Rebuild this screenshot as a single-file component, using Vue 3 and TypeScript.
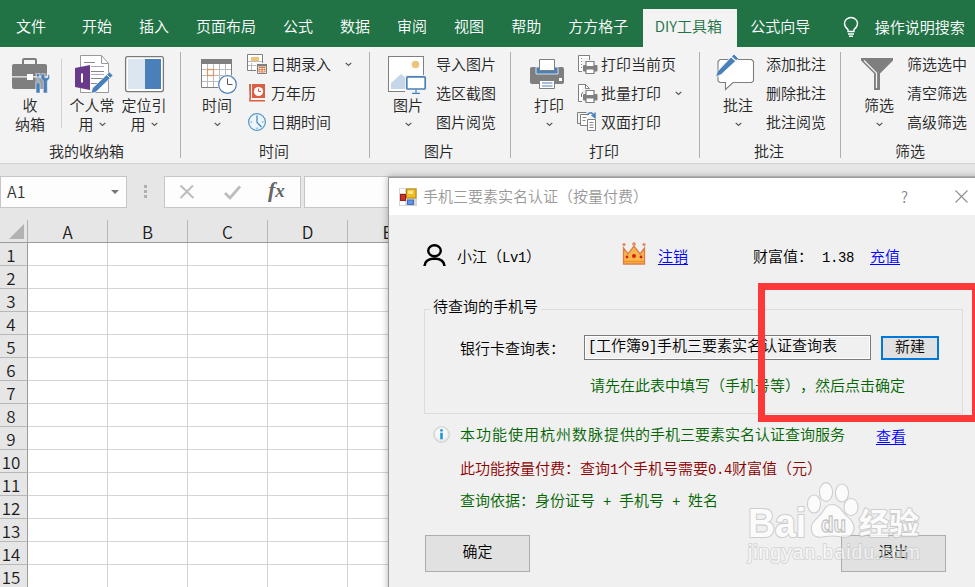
<script setup lang="ts">
interface BigButton {
  icon: string
  cx: number
  lines: string[]
  inlineArrow?: boolean
  ownArrow?: boolean
  divider?: boolean
}
interface SmallButton {
  text: string
  icon?: string
  box?: string
  arrow?: boolean
}
interface Group {
  name: string
  kind: string
  big: BigButton[]
  small: SmallButton[]
}

const tabs: string[] = ['文件', '开始', '插入', '页面布局', '公式', '数据', '审阅', '视图', '帮助', '方方格子', 'DIY工具箱', '公式向导']
const activeTab = 'DIY工具箱'

const printer = (y: number) => `
  <path d="M582 ${y + 4}h16v16h-16z" fill="#f3f3f3"/>
  <rect x="583" y="${y + 11}" width="14.500" height="6.500" rx="1" fill="#7f7f7f"/>
  <path d="M586 ${y + 7.500}h8v5h-8z" fill="#fff" stroke="#7f7f7f" stroke-width="1.200"/>
  <path d="M586 ${y + 15}h8v4.500h-8z" fill="#fff" stroke="#7f7f7f" stroke-width="1.200"/>`

const art: Record<string, string> = {
  briefcase: `
    <path d="M23 64v-4q0-1 1-1h11q1 0 1 1v4" fill="none" stroke="#7f7f7f" stroke-width="2"/>
    <rect x="12" y="64" width="35" height="25" rx="2" fill="#7f7f7f"/>
    <path d="M12 76.800h35" stroke="#f3f3f3" stroke-width="1.200"/>
    <rect x="27" y="74" width="6" height="6" fill="#fff"/>
    <path d="M35 73h14v20H35z" fill="#f3f3f3" opacity=".25"/>
    <path d="M36.500 73.500h3v2l-.8 1v6.500h1.300v10h-4v-10h1.300v-6.500l-.8-1z" fill="#4a80b9" stroke="#f3f3f3" stroke-width=".5"/>
    <path d="M42.500 73.700q-2 1.500-1.500 4.300.7 2 2.300 2.800v12.200h4V80.800q2-1 2.400-3 .3-2.700-1.800-4.100v4h-3.200v-3.500z" fill="#4a80b9" stroke="#f3f3f3" stroke-width=".5"/>`,
  note: `
    <path d="M80.500 55.500h21l7 8v29h-28z" fill="#fff" stroke="#9a9a9a"/>
    <path d="M101.500 55.500v8h7" fill="none" stroke="#9a9a9a"/>
    <path d="M84 62.500h11M91 71.500h13M91 78.500h13M91 83.500h12" stroke="#888"/>
    <path d="M91 66.500h13M91 74.500h13" stroke="#b6a3c9"/>
    <path d="M75 68l15-3v25l-15-3z" fill="#69398a"/>
    <path d="M82 73.500v9" stroke="#fff" stroke-width="2"/>
    <path d="M91 93.500l1.500-5.500L109.500 72l3.500 3.500-17 16.500z" fill="#4a80b9" stroke="#fff" stroke-width=".7"/>
    <path d="M106.500 74.500l3.700 3.700" stroke="#fff"/>`,
  panes: `
    <rect x="125.600" y="56.600" width="37.800" height="35" rx="2" fill="#fff" stroke="#7a7a7a" stroke-width="1.300"/>
    <path d="M128 59h17v30h-17z" fill="#dce6f1"/><path d="M145 59h16v30h-16z" fill="#4a80b9"/>`,
  calendar: `
    <path d="M201.500 60v27.500h30V60z" fill="#fff" stroke="#7f7f7f"/>
    <path d="M207.500 64v23M213.500 64v23M219.500 64v23M225.500 64v23M202 69.500h29M202 75.500h29M202 81.500h29" stroke="#bbb"/>
    <path d="M201 59h31v5h-31z" fill="#7f7f7f"/>
    <rect x="207.500" y="69.500" width="6" height="6" fill="#fff" stroke="#e5915a" stroke-width="1.200"/>
    <circle cx="227.500" cy="84.500" r="10" fill="#f3f3f3"/>
    <circle cx="227.500" cy="84.500" r="8.800" fill="#fff" stroke="#4a80b9" stroke-width="1.200"/>
    <path d="M227.500 78.500v6h5" fill="none" stroke="#555"/>`,
  picture: `
    <rect x="388.500" y="56.500" width="35" height="35" fill="#fff" stroke="#7f7f7f"/>
    <circle cx="415.500" cy="64.500" r="3.800" fill="#ecc57c"/>
    <path d="M391 89v-6l10-9 5 4v11z" fill="#c5d6ea"/>
    <path d="M405 75h22v20h-22z" fill="#f3f3f3"/>
    <rect x="406.800" y="76.800" width="18.400" height="12.200" rx="1" fill="#fff" stroke="#4a80b9" stroke-width="1.700"/>
    <path d="M416 90v3.500M412 93.400h8" stroke="#4a80b9" stroke-width="1.200"/>`,
  printer: `
    <rect x="530" y="67" width="34" height="17" rx="2" fill="#7f7f7f"/>
    <path d="M536 67h22v7h-22z" fill="#4a80b9" stroke="#f3f3f3" stroke-width=".8"/>
    <path d="M539.500 59.500h15v11h-15z" fill="#fff" stroke="#7f7f7f"/>
    <path d="M539.500 80.500h15v8h-15z" fill="#fff" stroke="#7f7f7f"/>
    <path d="M542 83h10.500M542 86h10.500" stroke="#4a80b9" stroke-width="1.200"/>
    <path d="M559 78h3v3h-3z" fill="#fff"/>`,
  comment: `
    <path d="M720 59.500h31.500l2 2V81l-2 1.500H733l-7.500 7v-7H720l-2-1.500V61.500z" fill="#fff" stroke="#7f7f7f" stroke-width="1.100"/>
    <path d="M715.500 77l1.800-5.500L734 54l4.500 4.500-17.300 16z" fill="#4a80b9" stroke="#f3f3f3" stroke-width=".9"/>
    <path d="M731 56.500l5 4.500" stroke="#fff" stroke-width="1.200"/>`,
  funnel: `
    <path d="M861 58h32v2.500L880 73.500V90h-6V73.500L861 60.500z" fill="#7f7f7f"/>
    <path d="M864 60.500l12.500 12.500v15" fill="none" stroke="#f3f3f3" stroke-width="1.200"/>`,
  form: `
    <path d="M247.500 54.500h15v16h-15z" fill="#fff" stroke="#7f7f7f"/>
    <path d="M248 61.500h14M248 65.500h14M251.500 63v7" stroke="#bbb"/>
    <path d="M251 57h8v4h-8z" fill="#ecc57c"/>
    <path d="M256 63h12v12h-12z" fill="#f3f3f3"/>
    <path d="M257.500 64.500h9v9h-9z" fill="#fff" stroke="#7f7f7f"/><path d="M257 64h10v2.500h-10z" fill="#7f7f7f"/>
    <path d="M259 67.500h6v4.500h-6zM262 67v5M259 69.700h6" fill="none" stroke="#d9743a"/>`,
  almanac: `
    <path d="M252 84h13v14h-13z" fill="#d95f43"/><path d="M249 84h2v14h-1.500z" fill="#d95f43"/>
    <path d="M250 98v2.800h15" fill="none" stroke="#d95f43" stroke-width="1.600"/>
    <circle cx="258.500" cy="91.500" r="4.600" fill="#fff"/><path d="M258.500 88.500v3h2.500" fill="none" stroke="#d95f43"/>`,
  clock: `
    <circle cx="257" cy="122" r="8.400" fill="#eef5fa" stroke="#5496c6" stroke-width="1.200"/>
    <path d="M257 115.500v7l4.500 4.500" fill="none" stroke="#3f85bb" stroke-width="1.200"/>
    <path d="M250.500 122h1.500M262 122h1.500M257 127.500v1.500" stroke="#5496c6"/>`,
  printPage: `
    <path d="M578.500 55.500h11v16h-11z" fill="#fff" stroke="#7f7f7f"/>
    <path d="M581 58.500h6M581 61.500h6M581 64.500h5M581 67.500h2" stroke="#888"/>${printer(54)}
    <path d="M589.500 55v5" stroke="#7f7f7f"/>`,
  printBatch: `
    <path d="M578.500 84.500h7l4 4v13h-11z" fill="#fff" stroke="#7f7f7f"/>${printer(83)}
    <path d="M585.500 88.500v-4l4 4z" fill="#fff" stroke="#7f7f7f"/>
    <path d="M581.500 97v-3l1.500-2" stroke="#777" fill="none"/>`,
  printDuplex: `
    <path d="M580 123.500h-2.500v-11h9" fill="none" stroke="#7f7f7f"/>
    <path d="M587 125.500h-6.500v-11H589" fill="#fff" stroke="#7f7f7f"/>
    <path d="M582.500 117.500h4M582.500 120.500h3" stroke="#888"/>
    <path d="M587.500 119.500h8v11h-8z" fill="#fff" stroke="#7f7f7f"/>
    <path d="M589.500 122.500h4M589.500 125h4M589.500 127.500h4" stroke="#888"/>
    <path d="M587 115q4-5 7.500 1M591.500 115l3.500 2.500v-5" fill="none" stroke="#4a80b9" stroke-width="1.500"/>`,
}

const groups: Group[] = [
  {
    name: '我的收纳箱', kind: 'box', small: [],
    big: [
      { icon: 'briefcase', cx: 30, lines: ['收', '纳箱'], divider: true },
      { icon: 'note', cx: 92, lines: ['个人常', '用'], inlineArrow: true },
      { icon: 'panes', cx: 144, lines: ['定位引', '用'], inlineArrow: true },
    ],
  },
  {
    name: '时间', kind: 'time', big: [{ icon: 'calendar', cx: 217, lines: ['时间'], ownArrow: true }],
    small: [
      { text: '日期录入', icon: 'form', box: '247 53 21 22', arrow: true },
      { text: '万年历', icon: 'almanac', box: '247 82 21 22' },
      { text: '日期时间', icon: 'clock', box: '247 111 21 22' },
    ],
  },
  {
    name: '图片', kind: 'plain', big: [{ icon: 'picture', cx: 408, lines: ['图片'], ownArrow: true }],
    small: [{ text: '导入图片' }, { text: '选区截图' }, { text: '图片阅览' }],
  },
  {
    name: '打印', kind: 'print', big: [{ icon: 'printer', cx: 549, lines: ['打印'], ownArrow: true }],
    small: [
      { text: '打印当前页', icon: 'printPage', box: '577 53 21 22' },
      { text: '批量打印', icon: 'printBatch', box: '577 82 21 22', arrow: true },
      { text: '双面打印', icon: 'printDuplex', box: '577 111 21 22' },
    ],
  },
  {
    name: '批注', kind: 'plain', big: [{ icon: 'comment', cx: 738, lines: ['批注'], ownArrow: true }],
    small: [{ text: '添加批注' }, { text: '删除批注' }, { text: '批注阅览' }],
  },
  {
    name: '筛选', kind: 'plain', big: [{ icon: 'funnel', cx: 879, lines: ['筛选'], ownArrow: true }],
    small: [{ text: '筛选选中' }, { text: '清空筛选' }, { text: '高级筛选' }],
  },
]

const columns: string[] = ['A', 'B', 'C', 'D', 'E']
const rows: number[] = Array.from({ length: 15 }, (_, i) => i + 1)

/* Splits a string into half-width and full-width runs. */
const runs = (s: string): { t: string; half: boolean }[] =>
  (s.match(/[\x20-\x7e]+|[^\x20-\x7e]+/g) ?? []).map((t) => ({ t, half: t.charCodeAt(0) < 127 }))

const userName = runs('小江（Lv1）')
const bookName = runs('[工作簿9]手机三要素实名认证查询表')
const priceNote = runs('此功能按量付费：查询1个手机号需要0.4财富值（元）')
const basisNote = runs('查询依据：身份证号 + 手机号 + 姓名')
</script>

<template>
  <div class="app">
    <nav class="tabs">
      <span v-for="t in tabs" :key="t" class="tab" :class="{ active: t === activeTab }">{{ t }}</span>
      <svg class="bulb" width="16" height="22" viewBox="0 0 16 22">
        <path d="M5 15.500v-2Q1.500 11 1.500 7.500a6.500 6 0 0 1 13 0q0 3.500-3.500 6v2zM5 18h6M6 20.300h4" fill="none" stroke="#fff" stroke-width="1.400" />
      </svg>
      <span class="tell">操作说明搜索</span>
    </nav>

    <section class="ribbon">
      <div v-for="g in groups" :key="g.name" class="group" :class="g.kind">
        <div class="group-body">
          <template v-for="b in g.big" :key="b.icon">
            <div class="big">
              <svg class="bicon" width="48" height="44" :viewBox="`${b.cx - 24} 52 48 44`" v-html="art[b.icon]"></svg>
              <span class="line">{{ b.lines[0] }}</span>
              <span class="line">
                <span v-if="b.lines[1]">{{ b.lines[1] }}</span>
                <svg v-if="b.inlineArrow || b.ownArrow" class="chev" width="7" height="5" viewBox="0 0 7 5"><path d="M.7.900l2.800 2.600L6.300.900" /></svg>
              </span>
            </div>
            <i v-if="b.divider" class="divider"></i>
          </template>
          <div v-if="g.small.length" class="smalls">
            <div v-for="s in g.small" :key="s.text" class="small">
              <svg v-if="s.icon" class="sicon" width="21" height="22" :viewBox="s.box" v-html="art[s.icon]"></svg>
              <span>{{ s.text }}</span>
              <svg v-if="s.arrow" class="chev far" width="7" height="5" viewBox="0 0 7 5"><path d="M.7.900l2.800 2.600L6.300.900" /></svg>
            </div>
          </div>
        </div>
        <div class="group-name">{{ g.name }}</div>
      </div>
    </section>

    <section class="formula">
      <div class="namebox"><span>A1</span><i class="caret"></i></div>
      <div class="dots"><i></i><i></i><i></i></div>
      <div class="fx">
        <svg width="16" height="16" viewBox="0 0 16 16"><path d="M1.500 1.500l13 12.500M14 1.500L1.500 14" stroke="#bdbdbd" stroke-width="2" fill="none" /></svg>
        <svg width="17" height="15" viewBox="0 0 17 15"><path d="M1 8l5 5L16 1.500" stroke="#bdbdbd" stroke-width="2.800" fill="none" /></svg>
        <span class="fxtext"><b>f</b>x</span>
      </div>
      <div class="entry"></div>
    </section>

    <section class="sheet">
      <div class="head">
        <div class="corner"><svg width="15" height="15" viewBox="0 0 15 15"><path d="M15 0v15H0z" fill="#b2b2b2" /></svg></div>
        <div v-for="c in columns" :key="c" class="col">{{ c }}</div>
      </div>
      <div v-for="r in rows" :key="r" class="row">
        <div class="num">{{ r }}</div>
        <div v-for="c in columns" :key="c" class="cell"></div>
      </div>
    </section>

    <section class="dialog">
      <header class="title">
        <svg width="18" height="18" viewBox="0 0 18 18">
          <rect width="18" height="18" fill="#d6d6d6" />
          <path d="M1 1h5v4H1zM1 13h5v4H1z" fill="#fff" />
          <rect x="7.500" y="1" width="9.500" height="9" fill="#f3bd22" stroke="#b88708" />
          <rect x="9" y="2.500" width="5" height="3.500" fill="#ffe38a" />
          <rect x="1.500" y="6.500" width="5" height="6" fill="#c8332b" stroke="#942019" />
          <rect x="8.500" y="12" width="6" height="4.500" fill="#5f93e6" stroke="#3f6fc4" />
        </svg>
        <span class="caption">手机三要素实名认证（按量付费）</span>
        <span class="help">?</span>
        <svg class="close" width="13" height="13" viewBox="0 0 13 13"><path d="M.5.500l12 12M12.500.500l-12 12" stroke="#8f8f8f" stroke-width="1.100" /></svg>
      </header>

      <div class="user">
        <svg width="24" height="24" viewBox="0 0 24 24">
          <ellipse cx="11.500" cy="6.800" rx="6.300" ry="5.500" fill="none" stroke="#000" stroke-width="2.400" />
          <path d="M1.500 22q.5-7 10-7.500 9.500.5 10 7.500" fill="none" stroke="#000" stroke-width="2.600" />
        </svg>
        <span><span v-for="(p, i) in userName" :key="i" :class="{ half: p.half }">{{ p.t }}</span></span>
        <svg class="crown" width="24" height="24" viewBox="0 0 24 24">
          <path d="M1.500 6L6 12l6-8 6 8 4.500-6v16h-21z" fill="#f9b64b" stroke="#dd7c4c" stroke-width="1.300" />
          <path d="M2 19.500h20" stroke="#f18c22" stroke-width="1.300" />
          <circle cx="2" cy="2.500" r="1.600" fill="#e28a57" /><circle cx="12" cy="2" r="1.800" fill="#e28a57" /><circle cx="22" cy="2.500" r="1.600" fill="#e28a57" />
          <circle cx="12" cy="14" r="2" fill="#d0201a" /><circle cx="5" cy="15" r="1.400" fill="#d0201a" /><circle cx="19" cy="15" r="1.400" fill="#d0201a" />
        </svg>
        <a>注销</a>
        <span>财富值：</span>
        <span><span class="half">1.38</span></span>
        <a>充值</a>
      </div>

      <fieldset class="box">
        <legend>待查询的手机号</legend>
        <div class="field">
          <label>银行卡查询表：</label>
          <div class="input"><span v-for="(p, i) in bookName" :key="i" :class="{ half: p.half }">{{ p.t }}</span></div>
          <button class="create">新建</button>
        </div>
        <p class="hint">请先在此表中填写（手机号等），然后点击确定</p>
      </fieldset>

      <div class="note green info">
        <svg width="17" height="17" viewBox="0 0 17 17">
          <circle cx="8.500" cy="8.500" r="7.800" fill="#e9e9e9" stroke="#cdcdcd" />
          <circle cx="8.500" cy="7.500" r="6" fill="#f7f7f7" />
          <path d="M8.500 3.200v2.300M8.500 6.800v6.500" stroke="#1c9bd3" stroke-width="2.600" />
        </svg>
        <span class="service"><span class="wide">本功能使用杭州数脉提</span>供的手机三要素实名认证查询服务</span>
        <a>查看</a>
      </div>
      <div class="note red"><span><span v-for="(p, i) in priceNote" :key="i" :class="{ half: p.half }">{{ p.t }}</span></span></div>
      <div class="note basis green"><span><span v-for="(p, i) in basisNote" :key="i" :class="{ half: p.half }">{{ p.t }}</span></span></div>

      <footer class="actions">
        <button>确定</button>
        <button>退出</button>
      </footer>
    </section>

    <svg class="watermark" width="180" height="90" viewBox="745 480 180 90">
      <g fill="#fff" stroke="#c4c4c4" stroke-width="2.200" stroke-linejoin="round" paint-order="stroke">
        <g opacity=".9">
          <text x="748" y="537" font-size="41" font-weight="700" textLength="58" lengthAdjust="spacingAndGlyphs">Bai</text>
          <ellipse cx="814" cy="504" rx="6" ry="8.500" />
          <ellipse cx="826" cy="492" rx="6" ry="8.800" />
          <ellipse cx="842" cy="493" rx="6" ry="8.500" />
          <ellipse cx="851" cy="507" rx="6.500" ry="8" />
          <path d="M832 505c7 0 9 6 14 11 5 4 9 9 7 15-2 7-9 6-14 5-5-.7-9-.7-14 0-6 1.500-12 1-13-6-1-6 3-9 7-13 5-4 6-12 13-12z" />
          <text x="859" y="534" font-size="30" font-weight="700" class="cjk">经验</text>
        </g>
        <text x="748" y="558.500" font-size="19.500" textLength="172" lengthAdjust="spacing" opacity=".65" stroke-width="2">jingyan.baidu.com</text>
      </g>
      <text x="821" y="532" font-size="22" font-weight="700" fill="#fff" stroke="#bdbdbd" stroke-width="1.300" textLength="25" lengthAdjust="spacingAndGlyphs">du</text>
    </svg>
    <div class="marker"></div>
  </div>
</template>

<style>
body {
  overflow: hidden;
}
</style>

<style scoped>
.app {
  position: relative;
  width: 975px;
  height: 587px;
  overflow: hidden;
  background: #e6e6e6;
  color: #262626;
  font: 350 15px/19px "Noto Sans CJK SC", sans-serif;
  white-space: nowrap;
  text-spacing-trim: space-all;
}
.app svg {
  display: block;
  flex: none;
}
.tabs {
  display: flex;
  align-items: flex-end;
  height: 47px;
  padding-left: 3px;
  background: #217346;
  color: #fff;
}
.tab {
  height: 38px;
  padding: 0 13.5px;
  line-height: 33px;
}
.tab:first-child {
  padding-left: 13px;
  margin-right: 9px;
}
.tab.active {
  background: #f3f3f3;
  color: #217346;
  width: 70px;
  padding: 0 12px;
  margin: 0 0 0 1px;
}
.bulb {
  margin: 0 16px 9px 19px;
}
.tell {
  height: 38px;
  line-height: 35px;
}
.ribbon {
  display: flex;
  height: 116px;
  background: #f3f3f3;
  border-bottom: 1px solid #d2d2d2;
}
.group {
  flex: none;
  width: 141px;
  display: flex;
  flex-direction: column;
  background: linear-gradient(#b0b0b0, #b0b0b0) no-repeat right 5px / 1px 106px;
}
.group.box {
  width: 181px;
}
.group.time,
.group.print {
  width: 189px;
}
.group-body {
  display: flex;
  height: 90px;
  box-sizing: border-box;
  padding: 3px 0 0 12px;
}
.box .group-body {
  padding-left: 4px;
}
.time .group-body {
  padding-left: 10px;
}
.big {
  width: 52px;
  padding-top: 2px;
  display: flex;
  flex-direction: column;
  align-items: center;
}
.bicon {
  margin-bottom: -1px;
}
.line {
  height: 19px;
  display: flex;
  align-items: center;
  gap: 5px;
}
.line .chev {
  margin-top: 2px;
}
.chev {
  fill: none;
  stroke: #555;
  stroke-width: 1.2;
}
.chev.far {
  margin: 2px 0 0 10px;
}
.divider {
  width: 1px;
  height: 69px;
  margin: 9px 4px 0 5px;
  background: #d2d2d2;
}
.smalls {
  margin: -1px 0 0 2px;
}
.time .smalls {
  margin-left: 4px;
}
.small {
  height: 29px;
  display: flex;
  align-items: center;
  gap: 4px;
}
.sicon {
  margin-right: -1px;
}
.group-name {
  height: 22px;
  line-height: 28px;
  text-align: center;
  padding-right: 3px;
}
.box .group-name {
  padding-right: 8px;
}
.formula {
  display: flex;
  align-items: flex-start;
  height: 44px;
  box-sizing: border-box;
  padding-top: 12px;
}
.formula > div {
  flex: none;
  height: 32px;
  box-sizing: border-box;
}
.namebox,
.fx,
.entry {
  background: #fdfdfd;
  border: 1px solid #c6c6c6;
}
.namebox {
  width: 127px;
  display: flex;
  align-items: center;
  justify-content: space-between;
  padding: 0 7px 1px 6px;
  font-size: 16px;
  color: #333;
}
.caret {
  border: 4px solid transparent;
  border-top-color: #777;
  border-bottom: 0;
}
.dots {
  width: 37px;
  padding: 9px 0 0 17px;
  display: flex;
  flex-direction: column;
  gap: 2px;
}
.dots i {
  width: 3px;
  height: 3px;
  background: #b0b0b0;
}
.fx {
  width: 137px;
  display: flex;
  align-items: center;
  padding-left: 14px;
  gap: 29px;
}
.fxtext {
  font: italic 19px/28px "Liberation Serif", serif;
  color: #666;
  font-weight: 700;
  margin: -3px 0 0 -2px;
}
.fxtext b {
  font-size: 22px;
}
.entry {
  width: 671px;
  margin-left: 3px;
}
.sheet {
  width: 428px;
  background: #fff;
}
.head,
.row {
  display: flex;
}
.head {
  height: 35px;
  box-sizing: border-box;
  background: #e6e6e6;
  padding-top: 12px;
  border-bottom: 1px solid #9b9b9b;
}
.corner {
  width: 28px;
  box-sizing: border-box;
  padding: 4px 0 0 9px;
  border-right: 1px solid #b0b0b0;
}
.col,
.cell {
  flex: none;
  width: 80px;
  box-sizing: border-box;
  border-right: 1px solid #b8b8b8;
}
.col {
  font-size: 17px;
  line-height: 23px;
  text-align: center;
  color: #1c1c1c;
}
.row {
  height: 23px;
}
.num {
  width: 28px;
  box-sizing: border-box;
  padding-right: 5px;
  border-right: 1px solid #9b9b9b;
  border-bottom: 1px solid #b8b8b8;
  background: #e6e6e6;
  font-size: 17px;
  line-height: 24px;
  text-align: center;
  color: #1c1c1c;
}
.cell {
  border-color: #d4d4d4;
  border-bottom: 1px solid #d4d4d4;
}
.dialog {
  position: absolute;
  left: 388px;
  top: 177px;
  width: 600px;
  height: 420px;
  border: 1px solid #9a9a9a;
  background: #f0f0f0;
  box-shadow: 0 0 7px rgba(0, 0, 0, 0.3);
  color: #000;
}
.title {
  display: flex;
  align-items: center;
  height: 37px;
  padding-left: 10px;
  background: #fff;
  color: #999;
}
.caption {
  width: 477px;
  margin-left: 6px;
  padding-bottom: 2px;
}
.help {
  width: 9px;
  text-align: center;
  color: #888;
}
.close {
  margin-left: 46px;
}
.user {
  display: grid;
  grid-template-columns: 34px 165px 36px 95px 69px 48px auto;
  align-items: center;
  height: 82px;
  padding-left: 34px;
}
.user span,
.user a {
  padding-bottom: 1px;
}
.crown {
  margin-top: -4px;
}
.half {
  font: 14px/1 "Liberation Mono", monospace;
  letter-spacing: -0.4px;
  white-space: pre;
}
a {
  color: #0000ff;
  text-decoration: underline;
  text-underline-offset: 2px;
}
.box.box {
  min-width: 0;
}
fieldset {
  width: 539px;
  height: 117px;
  box-sizing: border-box;
  margin: 0 0 0 35px;
  padding: 14px 0 0 35px;
  border: 1px solid #dcdcdc;
}
legend {
  margin-left: -30px;
  padding: 0 3px 6px;
  line-height: 18px;
}
.field {
  display: flex;
  align-items: center;
  height: 25px;
}
.field label {
  width: 124px;
}
.input {
  width: 287px;
  height: 25px;
  box-sizing: border-box;
  border: 1px solid #7a7a7a;
  box-shadow: inset 0 0 0 1px #fff;
  padding: 0 3px;
  line-height: 18px;
}
button {
  font: inherit;
  color: #000;
  background: #e1e1e1;
  border: 1px solid #adadad;
  border-radius: 0;
  width: 105px;
  height: 37px;
  padding: 0 0 6px;
}
.create {
  width: 58px;
  height: 24px;
  margin: 1px 0 0 10px;
  border: 2px solid #0078d7;
  line-height: 16px;
  padding: 0 0 6px;
}
.hint {
  margin: 15px 0 0 130px;
  color: #006400;
}
.note {
  display: flex;
  align-items: center;
  height: 31px;
  padding-left: 71px;
}
.note.basis {
  height: 33px;
}
.note.info {
  height: 38px;
  padding-left: 44px;
}
.note svg {
  margin: 2px 10px 0 0;
}
.green {
  color: #006400;
}
.red {
  color: #8b0000;
}
.service {
  width: 416px;
}
.wide {
  letter-spacing: 1px;
}
.note a {
  padding-top: 4px;
}
.actions {
  display: flex;
  gap: 311px;
  padding: 19px 0 0 36px;
}
.watermark {
  position: absolute;
  left: 745px;
  top: 480px;
  font-family: "Liberation Sans", sans-serif;
  opacity: 0.85;
}
.cjk {
  font-family: "Noto Sans CJK SC", sans-serif;
}
.marker {
  position: absolute;
  left: 758px;
  top: 283px;
  width: 221px;
  height: 139px;
  box-sizing: border-box;
  border: 7px solid #fd3838;
}
</style>
